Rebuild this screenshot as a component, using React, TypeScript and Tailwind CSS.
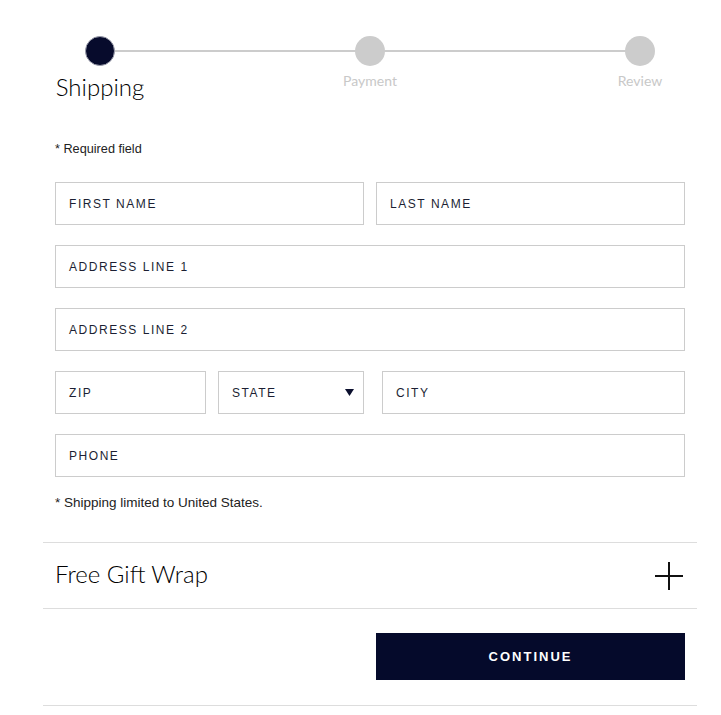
import React from 'react';

const steps = [
  { label: 'Shipping', active: true },
  { label: 'Payment', active: false },
  { label: 'Review', active: false },
];

const Field: React.FC<{ label: string; className?: string }> = ({ label, className = '' }) => (
  <div className={`h-[43px] border border-[#cccccc] flex items-center px-[13px] ${className}`}>
    <span className="text-[12px] leading-[14px] tracking-[1.55px] text-[#1c1f33]">{label}</span>
  </div>
);

const App: React.FC = () => {
  return (
    <div className="min-h-screen bg-white font-['Liberation_Sans',Arial,sans-serif]">
      <div className="ml-[43px] w-[654px]">
        <div className="px-[12px]">
          {/* Stepper */}
          <div className="relative pt-[36px]">
            <div className="absolute left-[45px] right-[45px] top-[50px] h-[2px] bg-[#cccccc]" />
            <div className="relative flex justify-between">
              {steps.map((step) => (
                <div key={step.label} className="w-[90px] flex flex-col items-center">
                  <div
                    className={`w-[30px] h-[30px] rounded-full ${
                      step.active ? 'bg-[#070b2c] border border-[#9a9cab]' : 'bg-[#cccccc]'
                    }`}
                  />
                  {step.active ? (
                    <span className="mt-[6px] text-[24px] leading-[30px] font-light text-black font-['Lato',sans-serif] whitespace-nowrap">
                      {step.label}
                    </span>
                  ) : (
                    <span className="mt-[5px] text-[14px] leading-[20px] text-[#c8c8c8] font-['Lato',sans-serif]">
                      {step.label}
                    </span>
                  )}
                </div>
              ))}
            </div>
          </div>

          <p className="mt-[39px] text-[12.7px] leading-[16px] text-[#222]">* Required field</p>

          {/* Form */}
          <div className="mt-[25px] flex flex-col gap-[20px]">
            <div className="grid grid-cols-2 gap-[12px]">
              <Field label="FIRST NAME" />
              <Field label="LAST NAME" />
            </div>
            <Field label="ADDRESS LINE 1" />
            <Field label="ADDRESS LINE 2" />
            <div className="flex">
              <Field label="ZIP" className="w-[151px]" />
              <div className="ml-[12px] w-[146px] h-[43px] border border-[#cccccc] flex items-center justify-between pl-[13px] pr-[9px]">
                <span className="text-[12px] leading-[14px] tracking-[1.55px] text-[#1c1f33]">STATE</span>
                <svg width="9" height="7" viewBox="0 0 9 7">
                  <path d="M0 0h9L4.5 7z" fill="#0b0f2e" />
                </svg>
              </div>
              <Field label="CITY" className="ml-[18px] flex-1" />
            </div>
            <Field label="PHONE" />
          </div>

          <p className="mt-[17px] text-[13.5px] leading-[18px] text-[#222]">* Shipping limited to United States.</p>
        </div>

        {/* Gift wrap */}
        <div className="mt-[30px] border-t border-b border-[#dddddd] h-[67px] px-[12px] flex items-center justify-between">
          <span className="text-[24px] leading-[28px] font-light text-black font-['Lato',sans-serif] -mt-[3px]">Free Gift Wrap</span>
          <svg width="30" height="30" viewBox="0 0 30 30" className="mr-[1px]">
            <path d="M15 1v28M1 15h28" stroke="#111" strokeWidth="2" />
          </svg>
        </div>

        <div className="px-[12px] pt-[24px] pb-[25px] grid grid-cols-2 gap-[12px] border-b border-[#dddddd]">
          <div />
          <button className="h-[47px] bg-[#050a2b] text-white text-[13px] font-bold tracking-[2px]">
            CONTINUE
          </button>
        </div>
      </div>
    </div>
  );
};

export default App;
